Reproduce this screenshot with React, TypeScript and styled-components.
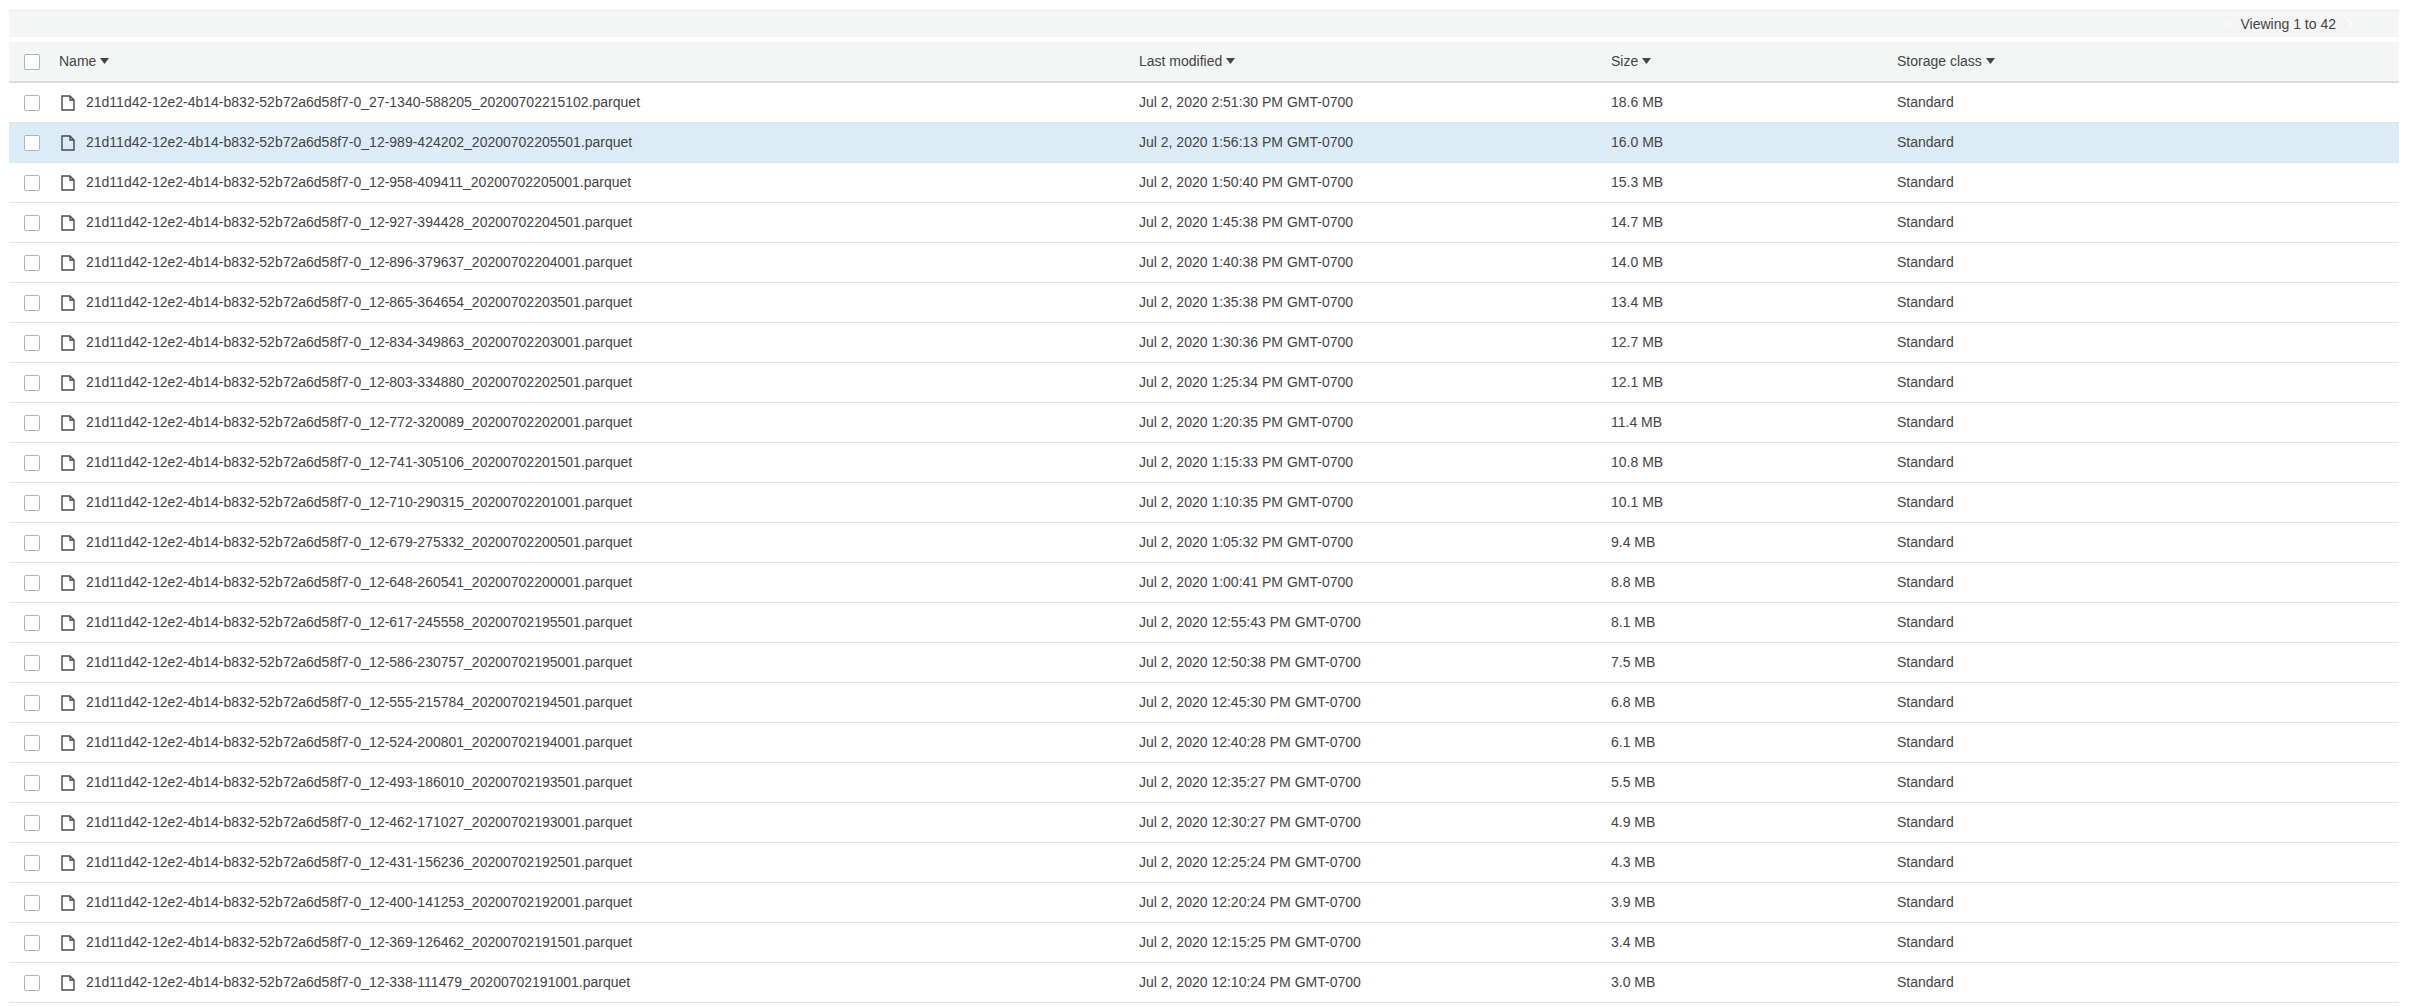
import React from "react";
import styled, { createGlobalStyle } from "styled-components";

const Global = createGlobalStyle`
  html, body { margin: 0; padding: 0; background: #fff; }
  body { font-family: "Liberation Sans", Arial, sans-serif; font-size: 14px; color: #444; }
`;

const Page = styled.div`
  padding: 10px 10px 0 9px;
  height: 997px;
  overflow: hidden;
`;

const TopBar = styled.div`
  height: 26px;
  border-top: 1px solid #eaeded;
  background: #f4f5f5;
  display: flex;
  align-items: center;
  justify-content: flex-end;
  padding-right: 46px;
  gap: 10px;
  margin-bottom: 5px;
`;

const Viewing = styled.span`
  font-size: 14px;
  color: #444;
`;

const Chevron = styled.svg`
  width: 7px;
  height: 12px;
  fill: none;
  stroke: #fbfbfb;
  stroke-width: 1.5;
`;

const Grid = styled.div`
  display: grid;
  grid-template-columns: 1130px 472px 286px 1fr;
  align-items: center;
`;

const HeaderRow = styled(Grid)`
  height: 39px;
  background: #f4f5f5;
  border-bottom: 2px solid #d9dcdc;
`;

const Row = styled(Grid)<{ $selected?: boolean }>`
  height: 39px;
  border-bottom: 1px solid #e1e4e4;
  background: ${(p) => (p.$selected ? "#dbecf6" : "#fff")};
  color: #444;
`;

const NameCell = styled.div`
  display: flex;
  align-items: center;
  padding-left: 15px;
`;

const Box = styled.span`
  box-sizing: border-box;
  width: 16px;
  height: 16px;
  border: 1px solid #aab7b8;
  border-radius: 2px;
  background: #fff;
  flex: none;
`;

const Cell = styled.span`
  margin-bottom: 2px;
`;

const HeadLabel = styled.span`
  display: inline-flex;
  align-items: center;
  gap: 4px;
  color: #444;
  margin-bottom: 2px;
`;

const HeadName = styled(HeadLabel)`
  margin-left: 19px;
`;

const CaretIcon = styled.svg`
  width: 9px;
  height: 6px;
  margin-top: 1px;
  fill: #444;
`;

const FileIcon = styled.svg`
  width: 14px;
  height: 16px;
  margin-left: 21px;
  margin-right: 11px;
  fill: none;
  stroke: #444b52;
  stroke-width: 1.4;
  flex: none;
`;

const rows: [string, string, string][] = [
  ["0_27-1340-588205_20200702215102", "2:51:30 PM", "18.6 MB"],
  ["0_12-989-424202_20200702205501", "1:56:13 PM", "16.0 MB"],
  ["0_12-958-409411_20200702205001", "1:50:40 PM", "15.3 MB"],
  ["0_12-927-394428_20200702204501", "1:45:38 PM", "14.7 MB"],
  ["0_12-896-379637_20200702204001", "1:40:38 PM", "14.0 MB"],
  ["0_12-865-364654_20200702203501", "1:35:38 PM", "13.4 MB"],
  ["0_12-834-349863_20200702203001", "1:30:36 PM", "12.7 MB"],
  ["0_12-803-334880_20200702202501", "1:25:34 PM", "12.1 MB"],
  ["0_12-772-320089_20200702202001", "1:20:35 PM", "11.4 MB"],
  ["0_12-741-305106_20200702201501", "1:15:33 PM", "10.8 MB"],
  ["0_12-710-290315_20200702201001", "1:10:35 PM", "10.1 MB"],
  ["0_12-679-275332_20200702200501", "1:05:32 PM", "9.4 MB"],
  ["0_12-648-260541_20200702200001", "1:00:41 PM", "8.8 MB"],
  ["0_12-617-245558_20200702195501", "12:55:43 PM", "8.1 MB"],
  ["0_12-586-230757_20200702195001", "12:50:38 PM", "7.5 MB"],
  ["0_12-555-215784_20200702194501", "12:45:30 PM", "6.8 MB"],
  ["0_12-524-200801_20200702194001", "12:40:28 PM", "6.1 MB"],
  ["0_12-493-186010_20200702193501", "12:35:27 PM", "5.5 MB"],
  ["0_12-462-171027_20200702193001", "12:30:27 PM", "4.9 MB"],
  ["0_12-431-156236_20200702192501", "12:25:24 PM", "4.3 MB"],
  ["0_12-400-141253_20200702192001", "12:20:24 PM", "3.9 MB"],
  ["0_12-369-126462_20200702191501", "12:15:25 PM", "3.4 MB"],
  ["0_12-338-111479_20200702191001", "12:10:24 PM", "3.0 MB"],
];

const File = () => (
  <FileIcon viewBox="0 0 14 16">
    <path d="M1 1h8l4 4v10H1z" />
    <path d="M9 1v4h4" />
  </FileIcon>
);

const Caret = () => (
  <CaretIcon viewBox="0 0 9 6">
    <path d="M0 0h9L4.5 6z" />
  </CaretIcon>
);

export default function App() {
  return (
    <Page>
      <Global />
      <TopBar>
        <Chevron viewBox="0 0 7 12"><path d="M6 1L1 6l5 5" /></Chevron>
        <Viewing>Viewing 1 to 42</Viewing>
        <Chevron viewBox="0 0 7 12"><path d="M1 1l5 5-5 5" /></Chevron>
      </TopBar>
      <HeaderRow>
        <NameCell>
          <Box />
          <HeadName>Name <Caret /></HeadName>
        </NameCell>
        <HeadLabel>Last modified <Caret /></HeadLabel>
        <HeadLabel>Size <Caret /></HeadLabel>
        <HeadLabel>Storage class <Caret /></HeadLabel>
      </HeaderRow>
      {rows.map(([suffix, time, size], i) => (
        <Row key={suffix} $selected={i === 1}>
          <NameCell>
            <Box />
            <File />
            <Cell>21d11d42-12e2-4b14-b832-52b72a6d58f7-{suffix}.parquet</Cell>
          </NameCell>
          <Cell>Jul 2, 2020 {time} GMT-0700</Cell>
          <Cell>{size}</Cell>
          <Cell>Standard</Cell>
        </Row>
      ))}
    </Page>
  );
}
